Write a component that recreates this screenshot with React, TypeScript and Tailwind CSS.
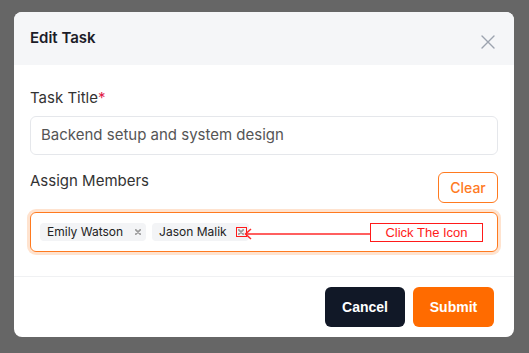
import React from 'react';

const members = ['Emily Watson', 'Jason Malik'];

function CloseIcon() {
  return (
    <svg width="14" height="14" viewBox="0 0 14 14" fill="none">
      <path d="M1 1L13 13M13 1L1 13" stroke="#9ca3af" strokeWidth="1.4" strokeLinecap="round" />
    </svg>
  );
}

function ChipX() {
  return (
    <svg width="6" height="6" viewBox="0 0 6 6" fill="none">
      <path d="M0.8 0.8L5.2 5.2M5.2 0.8L0.8 5.2" stroke="#9a9a9a" strokeWidth="1.7" strokeLinecap="round" />
    </svg>
  );
}

export default function App() {
  return (
    <div className="w-[529px] h-[353px] bg-[#666666] pt-3 pl-[14px] font-['Inter',sans-serif]">
      <div className="w-[500px] bg-white rounded-[8px] overflow-hidden">
        {/* header */}
        <div className="h-[53px] bg-[#f5f6f8] flex items-center justify-between pl-4 pr-[19px]">
          <h2 className="text-[15px] font-semibold text-[#1c1c28] -mt-[1px]">Edit Task</h2>
          <button className="mt-[6px]">
            <CloseIcon />
          </button>
        </div>

        {/* body */}
        <div className="px-4 pt-[22px] pb-[24px]">
          <label className="block text-[15px] leading-[22px] text-[#333]">
            Task Title<span className="text-[#e11d48]">*</span>
          </label>
          <div className="mt-[7px] h-[39px] rounded-[6px] border border-[#e5e7eb] flex items-center px-[10px] text-[15px] text-[#555]">
            Backend setup and system design
          </div>

          <div className="mt-[15px] flex items-start justify-between">
            <span className="text-[15px] leading-[22px] text-[#333]">Assign Members</span>
            <button className="mt-[2px] h-[31px] w-[60px] rounded-[6px] border border-[#ff7a1f] text-[14px] font-medium text-[#ff7a1f]">
              Clear
            </button>
          </div>

          <div className="relative mt-[9px] h-[40px] rounded-[6px] border border-[#ff7a1f] ring-[3px] ring-[#ffe3cf] flex items-center gap-[6px] pl-[9px]">
            {members.map((m, i) => (
              <div
                key={m}
                className={
                  i === 1
                    ? 'h-[18px] rounded-[4px] bg-[#f3f4f6] flex items-center pl-[7px] pr-[2px] gap-[9px] text-[12px] text-[#222]'
                    : 'h-[18px] rounded-[4px] bg-[#f3f4f6] flex items-center pl-[7px] pr-[5px] gap-[12px] text-[12px] text-[#222]'
                }
              >
                <span>{m}</span>
                {i === 1 ? (
                  <span className="w-[11px] h-[10px] border border-[#ff1a1a] flex items-center justify-center">
                    <ChipX />
                  </span>
                ) : (
                  <ChipX />
                )}
              </div>
            ))}

            {/* annotation */}
            <div className="absolute left-[213px] top-[15px] w-[126px] h-[12px]">
              <svg width="126" height="12" viewBox="0 0 126 12" fill="none">
                <path d="M2 6H126" stroke="#ff2a2a" strokeWidth="1.5" />
                <path d="M7 1L1.5 6L7 11" stroke="#ff2a2a" strokeWidth="1.5" />
              </svg>
            </div>
            <div className="absolute left-[339px] top-[10px] w-[113px] h-[19px] border-[1.5px] border-[#ff1a1a] bg-white flex items-center justify-center text-[13px] text-[#ff1a1a] font-['Liberation_Sans',sans-serif]">
              Click The Icon
            </div>
          </div>
        </div>

        {/* footer */}
        <div className="border-t border-[#f0f1f3] py-[10px] pr-5 flex justify-end gap-2">
          <button className="w-[80px] h-[40px] rounded-[6px] bg-[#111827] text-white text-[14px] font-bold font-['Liberation_Sans',sans-serif]">
            Cancel
          </button>
          <button className="w-[81px] h-[40px] rounded-[6px] bg-[#ff6b00] text-white text-[14px] font-bold font-['Liberation_Sans',sans-serif]">
            Submit
          </button>
        </div>
      </div>
    </div>
  );
}
